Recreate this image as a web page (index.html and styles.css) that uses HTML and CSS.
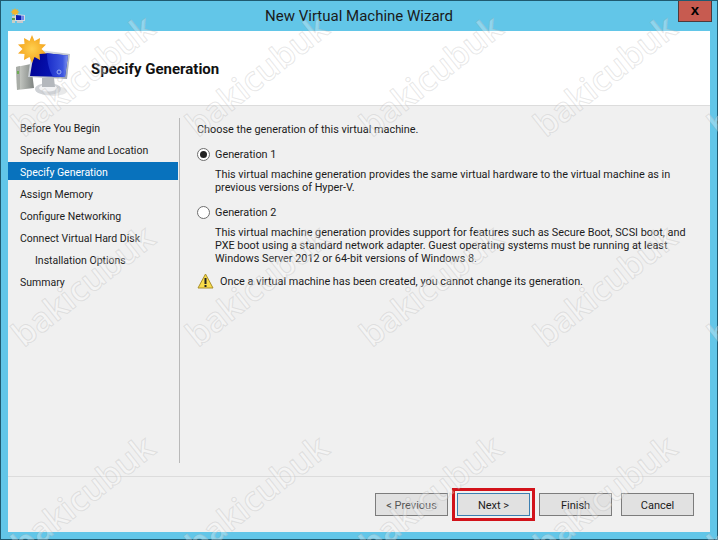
FILE: index.html
```html
<!DOCTYPE html>
<html lang="en">
<head>
  <meta charset="UTF-8">
  <title>New Virtual Machine Wizard</title>
  <link rel="stylesheet" href="styles.css">
</head>
<body>
  <div class="window">
    <!-- Title bar -->
    <div class="titlebar">
      <svg class="title-icon" width="16" height="16" viewBox="0 0 16 16">
        <rect x="2" y="8" width="3" height="7" fill="#c9cfc4"/>
        <rect x="2" y="10" width="3" height="2" fill="#5f9a4f"/>
        <path d="M5 6l10 1 0 6-10 0z" fill="#d5dbe3"/>
        <path d="M6 7l5 .5 0 4.500-5 0z" fill="#0d1fae"/>
        <path d="M11 7.500l3 .2 0 4.300-3 0z" fill="#6f86e6"/>
        <rect x="7" y="13" width="6" height="2" fill="#c5c8cc"/>
        <path d="M5 0l1 2 2-1-.5 2 2 1-2 1 .5 2-2-1-1 2-1-2-2 1 .5-2-2-1 2-1-.5-2 2 1z" fill="#f3b52c"/>
      </svg>
      <div class="title">New Virtual Machine Wizard</div>
      <div class="close">x</div>
    </div>

    <div class="client">
      <div class="header">
        <!-- coordinates are the screen ones, hence the viewBox -->
        <svg class="header-icon" width="60" height="66" viewBox="15 35 60 66">
          <defs>
            <linearGradient id="tower" x1="0" y1="0" x2="1" y2="0">
              <stop offset="0" stop-color="#d4d7d1"/>
              <stop offset="1" stop-color="#7e8380"/>
            </linearGradient>
            <linearGradient id="screen" x1="0" y1="0" x2="1" y2="0.2">
              <stop offset="0" stop-color="#00008f"/>
              <stop offset="1" stop-color="#0a1cc0"/>
            </linearGradient>
            <linearGradient id="glare" x1="0" y1="0" x2="1" y2="0">
              <stop offset="0" stop-color="#1a2cc8"/>
              <stop offset="0.75" stop-color="#3d57e0"/>
              <stop offset="1" stop-color="#8296ee"/>
            </linearGradient>
            <linearGradient id="frame" x1="0" y1="0" x2="1" y2="1">
              <stop offset="0" stop-color="#eef1f5"/>
              <stop offset="1" stop-color="#9aa2ae"/>
            </linearGradient>
            <radialGradient id="sun">
              <stop offset="0" stop-color="#ffd04f"/>
              <stop offset="1" stop-color="#f4a51e"/>
            </radialGradient>
          </defs>
          <path d="M16 67l15-3 3 24-17 2z" fill="url(#tower)"/>
          <path d="M16 67l4-1 0 23-3 1z" fill="#a9ada7"/>
          <rect x="17" y="71" width="2" height="3" fill="#6fae55"/>
          <ellipse cx="53" cy="91" rx="14" ry="5" fill="#e8e9ea"/>
          <ellipse cx="48" cy="89" rx="13" ry="6" fill="#cfd2d6"/>
          <ellipse cx="48" cy="88" rx="9" ry="3.500" fill="#f1f2f4"/>
          <path d="M42 78l12 0 1 9-13 0z" fill="#b4b8bd"/>
          <path d="M32 49l38 5-3 25-39-2z" fill="url(#frame)"/>
          <path d="M34 52l34 3.500-3 21.500-35-1z" fill="url(#screen)"/>
          <path d="M47 53.300l21 2.200-3 21.500-12-.3c-4-6-6-15-6-23.400z" fill="url(#glare)"/>
          <circle cx="59" cy="72" r="2" fill="none" stroke="#9db0f4"/>
          <path d="M32 35l2.500 6 5.500-3-.5 6 6.500 .5-4.500 4.500 4.500 4.500-6.500 .5 .5 6-5.500-3-2.500 6-2.500-6-5.500 3 .5-6-6.500-.5 4.500-4.500-4.500-4.500 6.500-.5-.5-6 5.500 3z" fill="url(#sun)"/>
        </svg>
        <h1>Specify Generation</h1>
      </div>

      <div class="body">
        <ul class="steps">
          <li>Before You Begin</li>
          <li>Specify Name and Location</li>
          <li class="active">Specify Generation</li>
          <li>Assign Memory</li>
          <li>Configure Networking</li>
          <li>Connect Virtual Hard Disk</li>
          <li class="sub">Installation Options</li>
          <li>Summary</li>
        </ul>

        <div class="content">
          <p class="intro">Choose the generation of this virtual machine.</p>

          <label class="option"><span class="radio checked"></span>Generation 1</label>
          <p class="desc">This virtual machine generation provides the same virtual hardware to the virtual machine as in<br>previous versions of Hyper-V.</p>

          <label class="option second"><span class="radio"></span>Generation 2</label>
          <p class="desc">This virtual machine generation provides support for features such as Secure Boot, SCSI boot, and<br>PXE boot using a standard network adapter. Guest operating systems must be running at least<br>Windows Server 2012 or 64-bit versions of Windows 8.</p>

          <div class="warning">
            <svg width="17" height="16" viewBox="0 0 17 16">
              <path d="M8.500 1L16 15H1z" fill="#f8dc4a" stroke="#a98f2c" stroke-linejoin="round"/>
              <rect x="7.500" y="5" width="2" height="6" fill="#222"/>
              <rect x="7.500" y="12" width="2" height="2" fill="#222"/>
            </svg>
            <span>Once a virtual machine has been created, you cannot change its generation.</span>
          </div>
        </div>
      </div>

      <div class="footer">
        <button class="disabled">&lt; Previous</button>
        <button class="default">Next &gt;</button>
        <button>Finish</button>
        <button>Cancel</button>
      </div>
    </div>
  </div>

  <!-- Screenshot watermark -->
  <div class="watermarks">
    <div class="mark-grid">
      <div class="mark"><span>bakicubuk</span></div>
      <div class="mark"><span>bakicubuk</span></div>
      <div class="mark"><span>bakicubuk</span></div>
      <div class="mark"><span>bakicubuk</span></div>
      <div class="mark"><span>bakicubuk</span></div>
      <div class="mark"><span>bakicubuk</span></div>
      <div class="mark"><span>bakicubuk</span></div>
      <div class="mark"><span>bakicubuk</span></div>
      <div class="mark"><span>bakicubuk</span></div>
      <div class="mark"><span>bakicubuk</span></div>
      <div class="mark"><span>bakicubuk</span></div>
      <div class="mark"><span>bakicubuk</span></div>
      <div class="mark"><span>bakicubuk</span></div>
      <div class="mark"><span>bakicubuk</span></div>
      <div class="mark"><span>bakicubuk</span></div>
    </div>
  </div>
</body>
</html>
```
FILE: styles.css
```css
/* Window chrome */
html, body {
  margin: 0;
  height: 100%;
  overflow: hidden;
}

body {
  font-family: Roboto, "Open Sans", sans-serif;
  font-size: 10.85px;
  color: #1c1c1c;
  position: relative;
}

.window {
  width: 718px;
  height: 540px;
  box-sizing: border-box;
  background-color: #62c6e8;
  border: 1px solid #1f5a70;
  padding: 0 7px 7px;
  display: flex;
  flex-direction: column;
}

.titlebar {
  height: 30px;
  display: flex;
  align-items: center;
  position: relative;
  flex-shrink: 0;
}

.title-icon {
  margin-left: 2px;
}

.title {
  flex: 1;
  text-align: center;
  font-size: 15px;
  color: #1a1a1a;
  padding-right: 18px;
}

.close {
  position: absolute;
  top: 0;
  right: -2px;
  width: 34px;
  height: 21px;
  box-sizing: border-box;
  background-color: #c75b50;
  border: 1px solid #4e3a3c;
  border-top: none;
  text-align: center;
  font: bold 15px/17px "Liberation Sans", sans-serif;
  color: #000;
}

.client {
  flex: 1;
  background-color: #f0f0f0;
  display: flex;
  flex-direction: column;
  min-height: 0;
}

/* Header */
.header {
  height: 74px;
  background-color: #fff;
  border-bottom: 1px solid #dcdcdc;
  display: flex;
  align-items: center;
  flex-shrink: 0;
}

.header-icon {
  margin-left: 7px;
}

h1 {
  margin: 2px 0 0 16px;
  font-size: 15px;
  font-weight: 700;
  color: #111;
}

/* Steps and page */
.body {
  height: 370px;
  display: flex;
  flex-shrink: 0;
}

.steps {
  list-style: none;
  margin: 11px 0 0;
  padding: 0;
  width: 170px;
  flex-shrink: 0;
  font-size: 10.5px;
}

.steps li {
  height: 22px;
  line-height: 24px;
  padding-left: 12px;
}

.steps li.active {
  height: 18px;
  line-height: 22px;
  margin: 1px 0 3px;
  background-color: #0872bd;
  color: #fff;
}

.steps li.sub {
  padding-left: 27px;
}

.content {
  margin: 12px 0 0 1px;
  height: 345px;
  border-left: 1px solid #b9b9b9;
  padding-left: 17px;
  flex: 1;
}

.content p {
  margin: 0;
  line-height: 13px;
}

.content .intro {
  padding-top: 5px;
}

.option {
  display: flex;
  align-items: center;
  margin-top: 10px;
  height: 16px;
}

.option.second {
  margin-top: 10px;
}

.radio {
  width: 11px;
  height: 11px;
  border: 1px solid #6e6e6e;
  border-radius: 50%;
  background-color: #fff;
  margin-right: 5px;
  position: relative;
  flex-shrink: 0;
}

.radio.checked::after {
  content: "";
  position: absolute;
  left: 2px;
  top: 2px;
  width: 7px;
  height: 7px;
  border-radius: 50%;
  background-color: #222;
}

.content .desc {
  margin: 6px 0 0 18px;
}

.warning {
  display: flex;
  align-items: center;
  gap: 6px;
  margin-top: 7px;
  height: 18px;
}

/* Buttons */
.footer {
  flex: 1;
  border-top: 1px solid #dcdcdc;
  padding: 16px 16px 0 0;
  display: flex;
  justify-content: flex-end;
  align-items: flex-start;
  gap: 9px;
}

button {
  width: 73px;
  height: 23px;
  padding: 1px 0 0;
  font: inherit;
  font-size: 11px;
  color: #1c1c1c;
  background-color: #e1e1e1;
  border: 1px solid #7c7c7c;
}

button.disabled {
  color: #555;
}

button.default {
  border-color: #3c7fb1;
  outline: 3px solid #d2121a;
  outline-offset: 2px;
}

/* Watermark laid over the whole screenshot */
.watermarks {
  position: absolute;
  left: 0;
  top: 0;
  width: 718px;
  height: 540px;
  overflow: hidden;
  pointer-events: none;
}

.mark-grid {
  margin: -30px 0 0 -5px;
  display: grid;
  grid-template-columns: repeat(5, 174px);
  grid-auto-rows: 210px;
}

.mark {
  display: flex;
  align-items: center;
  justify-content: center;
}

.mark span {
  font: 600 34px "Open Sans", sans-serif;
  color: rgba(255, 255, 255, 0.3);
  -webkit-text-stroke: 1px rgba(175, 175, 175, 0.3);
  transform: rotate(-38.5deg);
  white-space: nowrap;
}
```
